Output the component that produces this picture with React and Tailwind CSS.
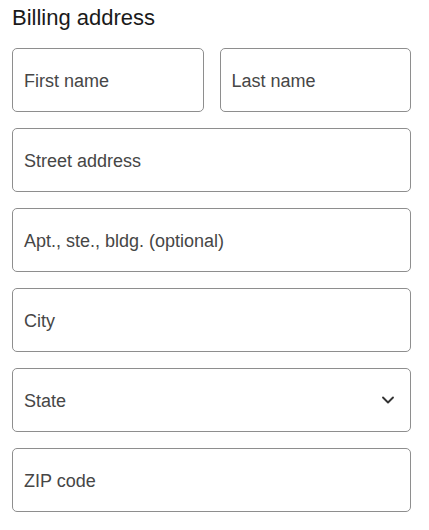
import { ChevronDown } from 'lucide-react';

const Field = ({ label, select }) => (
  <div className="flex h-16 items-center justify-between rounded-[5px] border border-[#8e8e8e] bg-white pl-[11px] pr-[12px]">
    <span className="pt-[2px] text-[18px] text-[#464646]">{label}</span>
    {select && <ChevronDown className="h-[20px] w-[20px] text-[#333]" strokeWidth={2.25} />}
  </div>
);

const App = () => {
  return (
    <div className="min-h-[530px] bg-white pl-3 pr-[18px] pt-[4px]" style={{ fontFamily: '"Liberation Sans", Arial, sans-serif' }}>
      <h2 className="mb-4 text-[22px] leading-7 text-[#1a1a1a]">Billing address</h2>
      <div className="flex flex-col gap-4">
        <div className="grid grid-cols-2 gap-4">
          <Field label="First name" />
          <Field label="Last name" />
        </div>
        <Field label="Street address" />
        <Field label="Apt., ste., bldg. (optional)" />
        <Field label="City" />
        <Field label="State" select />
        <Field label="ZIP code" />
      </div>
    </div>
  );
};

export default App;
